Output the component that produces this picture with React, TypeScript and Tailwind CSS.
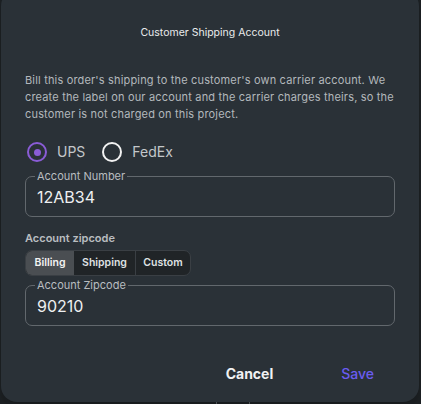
import { useState } from "react";

type Carrier = "UPS" | "FedEx";
type ZipSource = "Billing" | "Shipping" | "Custom";

const font = { fontFamily: "Inter, 'Noto Sans', sans-serif" };

function Radio({
  label,
  checked,
  onSelect,
}: {
  label: string;
  checked: boolean;
  onSelect: () => void;
}) {
  return (
    <button type="button" onClick={onSelect} className="flex items-center gap-[10px]">
      <span
        className={
          checked
            ? "flex h-[20px] w-[20px] items-center justify-center rounded-full border-2 border-[#8a5cd6]"
            : "flex h-[20px] w-[20px] items-center justify-center rounded-full border-2 border-[#f2f2f2]"
        }
      >
        {checked && <span className="h-[7px] w-[7px] rounded-full bg-[#8a5cd6]" />}
      </span>
      <span className="text-[14px] leading-[20px] text-[#c3c7ca]">{label}</span>
    </button>
  );
}

function OutlinedField({ label, value }: { label: string; value: string }) {
  return (
    <fieldset className="rounded-[7px] border border-[#62686d] pl-[9px] pr-3 pb-[7px]">
      <legend className="px-[2px] text-[11px] leading-[12px] text-[#b9bdc0]">{label}</legend>
      <input
        defaultValue={value}
        className="mt-[5px] w-full bg-transparent pl-[2px] text-[16px] leading-[20px] text-[#eef0f1] outline-none"
      />
    </fieldset>
  );
}

export default function App() {
  const [carrier, setCarrier] = useState<Carrier>("UPS");
  const [zipSource, setZipSource] = useState<ZipSource>("Billing");

  const segments: { key: ZipSource; width: string }[] = [
    { key: "Billing", width: "w-[48px]" },
    { key: "Shipping", width: "w-[61px]" },
    { key: "Custom", width: "w-[55px] border-l border-[#3a3f44]" },
  ];

  return (
    <div className="h-[404px] w-[421px] overflow-hidden bg-[#1c2023]" style={font}>
      {/* Dialog */}
      <div className="-mt-[10px] ml-[1px] w-[418px] rounded-[16px] bg-[#2a3137] px-6 pt-[35px] pb-[18px] shadow-lg">
        <h2 className="text-center text-[10.5px] leading-[16px] text-[#e9ebec]">
          Customer Shipping Account
        </h2>

        <p className="mt-[31px] whitespace-nowrap text-[11px] leading-[17px] tracking-[0.17px] text-[#b3b8bc]">
          Bill this order's shipping to the customer's own carrier account. We
          <br />
          create the label on our account and the carrier charges theirs, so the
          <br />
          customer is not charged on this project.
        </p>

        {/* Carrier */}
        <div className="mt-[19px] ml-[2px] flex items-center gap-[17px]">
          <Radio label="UPS" checked={carrier === "UPS"} onSelect={() => setCarrier("UPS")} />
          <Radio label="FedEx" checked={carrier === "FedEx"} onSelect={() => setCarrier("FedEx")} />
        </div>

        <div className="mt-[8px]">
          <OutlinedField label="Account Number" value="12AB34" />
        </div>

        <div className="mt-[14px] text-[11px] font-semibold leading-[14px] text-[#b9bdc0]">
          Account zipcode
        </div>

        <div className="mt-[5px] flex w-fit overflow-hidden rounded-[7px] border border-[#3a3f44] bg-[#202427]">
          {segments.map((s) => (
            <button
              key={s.key}
              type="button"
              onClick={() => setZipSource(s.key)}
              className={
                (zipSource === s.key ? "bg-[#4a4e52] text-[#f3f3f3] " : "text-[#dfe1e3] ") +
                s.width +
                " h-[24px] text-center text-[10.5px] font-semibold"
              }
            >
              {s.key}
            </button>
          ))}
        </div>

        <div className="mt-[3px]">
          <OutlinedField label="Account Zipcode" value="90210" />
        </div>

        {/* Actions */}
        <div className="mt-[38px] flex justify-end gap-[36px] pr-[5px]">
          <button type="button" className="px-4 text-[14px] font-bold leading-[20px] text-[#f1f2f3]">
            Cancel
          </button>
          <button type="button" className="px-4 text-[14px] font-medium leading-[20px] text-[#6a5cf0]">
            Save
          </button>
        </div>
      </div>

      {/* Content behind the dialog */}
      <div className="flex h-[6px] items-start text-[13px] leading-[16px] text-[#70757a]">
        <span className="ml-[216px] h-full border-l border-[#4a4f53]" />
        <span className="ml-[32px] h-full border-l border-[#4a4f53]" />
        <span className="ml-[16px]">1000 1100</span>
      </div>
    </div>
  );
}
